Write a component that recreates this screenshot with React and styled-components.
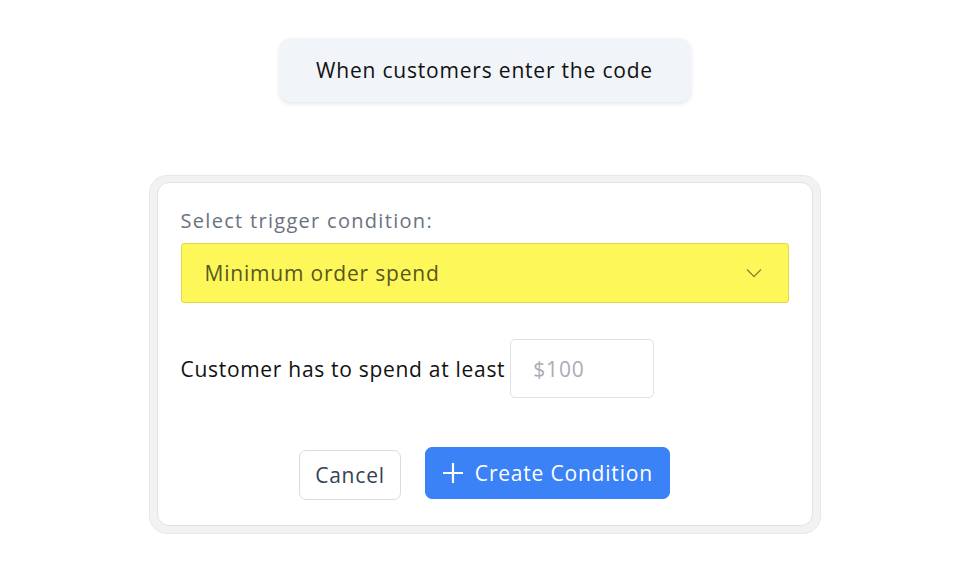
import React from 'react';
import styled, { createGlobalStyle } from 'styled-components';

const Global = createGlobalStyle`
  body {
    margin: 0;
    background: #fff;
    font-family: "Open Sans", "Liberation Sans", sans-serif;
    letter-spacing: 0.8px;
  }
`;

const Page = styled.div`
  display: flex;
  flex-direction: column;
  align-items: center;
  padding-top: 38px;
`;

const Trigger = styled.div`
  width: 412px;
  height: 64px;
  display: flex;
  align-items: center;
  justify-content: center;
  background: #f1f4f8;
  border-radius: 12px;
  box-shadow: 0 2px 4px rgba(0, 0, 0, 0.1);
  font-size: 21px;
  color: #111;
`;

const Shell = styled.div`
  margin-top: 73px;
  width: 672px;
  box-sizing: border-box;
  padding: 6px 7px 7px;
  background: #f2f2f2;
  border: 1px solid #e8e8e8;
  border-radius: 18px;
`;

const Card = styled.div`
  background: #fff;
  border: 1px solid #e2e2e2;
  border-radius: 12px;
  padding: 23px 23px 25px;
`;

const Label = styled.div`
  font-size: 20px;
  letter-spacing: 1.3px;
  color: #6b7280;
  line-height: 30px;
  margin-bottom: 7px;
`;

const Select = styled.div`
  height: 60px;
  box-sizing: border-box;
  display: flex;
  align-items: center;
  justify-content: space-between;
  padding: 0 26px 0 23px;
  background: #fef75a;
  border: 1px solid #dfd94e;
  border-radius: 3px;
  font-size: 21px;
  color: #59561f;
`;

const Row = styled.div`
  display: flex;
  align-items: center;
  gap: 5px;
  margin-top: 36px;
  font-size: 21px;
  letter-spacing: 0.7px;
  color: #111;
`;

const Amount = styled.input`
  width: 144px;
  height: 59px;
  box-sizing: border-box;
  border: 1.5px solid #dfe1e6;
  border-radius: 5px;
  padding: 0 22px;
  font: inherit;
  font-size: 21px;
  letter-spacing: 0.8px;
  outline: none;
  &::placeholder {
    color: #a8adb5;
  }
`;

const Actions = styled.div`
  display: flex;
  justify-content: center;
  align-items: flex-start;
  gap: 24px;
  margin-top: 49px;
`;

const Button = styled.button`
  display: inline-flex;
  align-items: center;
  gap: 11px;
  font-family: inherit;
  font-size: 21px;
  letter-spacing: 0.8px;
  border-radius: 7px;
  cursor: pointer;
  box-sizing: border-box;
  height: ${(p) => (p.primary ? '52px' : '50px')};
  margin-top: ${(p) => (p.primary ? '0' : '3px')};
  padding: ${(p) => (p.primary ? '0 16px' : '0 15px')};
  background: ${(p) => (p.primary ? '#3b82f6' : '#fff')};
  color: ${(p) => (p.primary ? '#fff' : '#374151')};
  border: 1px solid ${(p) => (p.primary ? '#3b82f6' : '#dcdcdc')};
`;

const Chevron = () => (
  <svg width="16" height="10" viewBox="0 0 16 10" fill="none">
    <path d="M1 1.5l7 7 7-7" stroke="#8a8630" strokeWidth="1.3" />
  </svg>
);

const Plus = () => (
  <svg width="22" height="22" viewBox="0 0 22 22" fill="none">
    <path d="M11 1v20M1 11h20" stroke="#fff" strokeWidth="2.2" />
  </svg>
);

export default function App() {
  return (
    <Page>
      <Global />
      <Trigger>When customers enter the code</Trigger>
      <Shell>
        <Card>
          <Label>Select trigger condition:</Label>
          <Select>
            <span>Minimum order spend</span>
            <Chevron />
          </Select>
          <Row>
            Customer has to spend at least
            <Amount placeholder="$100" />
          </Row>
          <Actions>
            <Button>Cancel</Button>
            <Button primary>
              <Plus />
              Create Condition
            </Button>
          </Actions>
        </Card>
      </Shell>
    </Page>
  );
}
